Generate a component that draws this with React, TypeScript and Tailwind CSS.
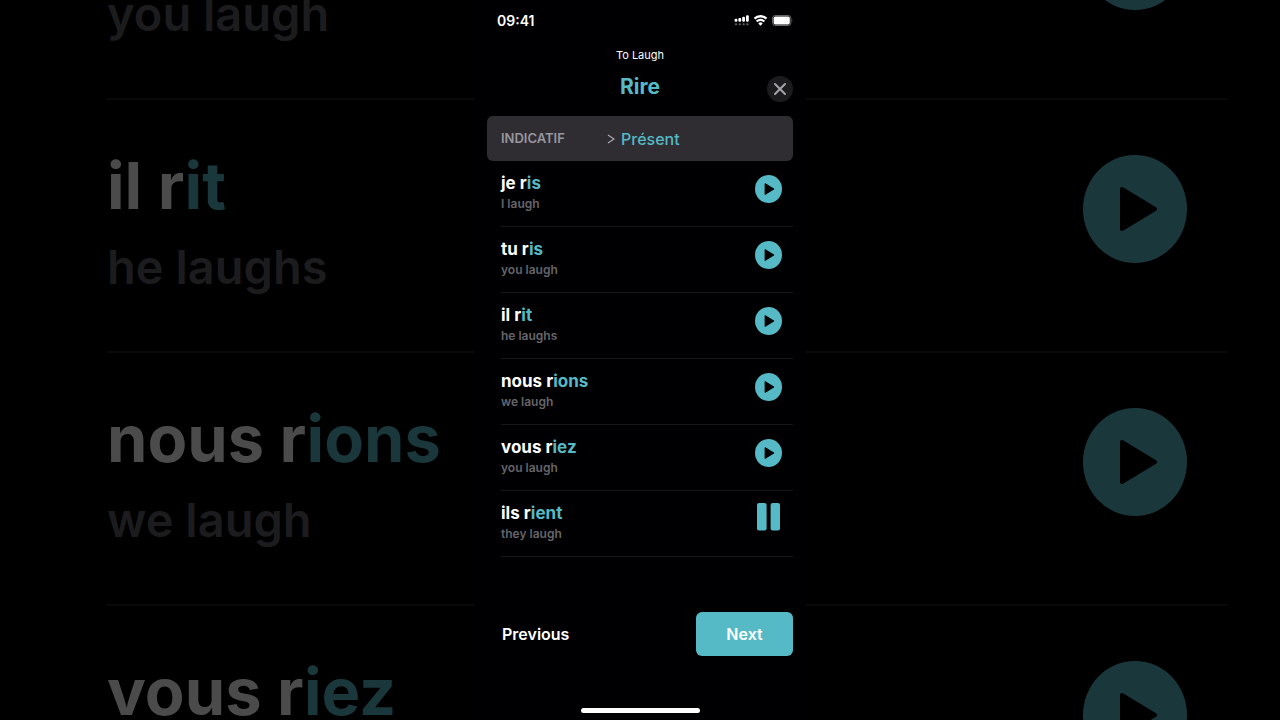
import { X } from 'lucide-react'

const verbs = [
  { pronoun: 'je', stem: 'r', ending: 'is', english: 'I laugh' },
  { pronoun: 'tu', stem: 'r', ending: 'is', english: 'you laugh' },
  { pronoun: 'il', stem: 'r', ending: 'it', english: 'he laughs' },
  { pronoun: 'nous', stem: 'r', ending: 'ions', english: 'we laugh' },
  { pronoun: 'vous', stem: 'r', ending: 'iez', english: 'you laugh' },
  { pronoun: 'ils', stem: 'r', ending: 'ient', english: 'they laugh', playing: true },
]

function PlayIcon({ className }: { className?: string }) {
  return (
    <svg viewBox="0 0 104 108" className={className} aria-hidden="true">
      <ellipse cx="52" cy="54" rx="52" ry="54" fill="currentColor" />
      <path d="M39 34 L72 54 L39 74 Z" fill="#000" stroke="#000" strokeWidth="4" strokeLinejoin="round" />
    </svg>
  )
}

function PauseIcon({ className }: { className?: string }) {
  return (
    <svg viewBox="0 0 27 28" className={className} aria-hidden="true">
      <rect x="2" y="0" width="9.6" height="27.6" rx="2" fill="currentColor" />
      <rect x="15.6" y="0" width="9.4" height="27.6" rx="2" fill="currentColor" />
    </svg>
  )
}

function StatusIcons() {
  return (
    <svg viewBox="0 0 60 14" className="h-[14px] w-[60px]" fill="#fff" aria-hidden="true">
      {/* dual sim signal */}
      <rect x="1.6" y="5.8" width="2.8" height="3" rx="1" />
      <rect x="5.4" y="5" width="2.8" height="3.8" rx="1" />
      <rect x="9.2" y="3.8" width="2.8" height="5" rx="1" />
      <rect x="13" y="2.2" width="2.8" height="6.6" rx="1" />
      <g opacity="0.35">
        <rect x="1.8" y="10.2" width="2.4" height="2" rx="0.8" />
        <rect x="5.6" y="10.2" width="2.4" height="2" rx="0.8" />
        <rect x="9.4" y="10.2" width="2.4" height="2" rx="0.8" />
        <rect x="13.2" y="10.2" width="2.4" height="2" rx="0.8" />
      </g>
      {/* wifi */}
      <g fill="none" stroke="#fff" strokeWidth="2.3">
        <path d="M21.5 5.6 A8.8 8.8 0 0 1 33.5 5.6" />
        <path d="M23.7 8.5 A5.4 5.4 0 0 1 31.3 8.5" />
      </g>
      <path d="M25.3 10.4 A3 3 0 0 1 29.7 10.4 L27.5 12.8 Z" />
      {/* battery */}
      <rect x="39.5" y="2.5" width="18.4" height="10" rx="2.8" fill="none" stroke="#fff" strokeOpacity="0.4" />
      <rect x="40.6" y="3.5" width="16.2" height="8" rx="1.8" />
      <path d="M58.8 6 Q60 7.5 58.8 9 Z" opacity="0.5" />
    </svg>
  )
}

// Oversized, dimmed copy of the list that fills the space around the phone
function Backdrop() {
  return (
    <div
      aria-hidden="true"
      className="pointer-events-none absolute inset-x-0 -top-[153px] bottom-0 overflow-hidden pr-[52px] pl-[107px]"
    >
      {verbs.slice(1, 5).map((verb) => (
        <div key={verb.pronoun} className="flex h-[253px] justify-between border-b-2 border-[#090909] pt-[55px] pr-[41px]">
          <div>
            <p className="text-[65px] leading-[62px] font-bold text-[#4b4b4b]">
              {verb.pronoun} {verb.stem}
              <span className="text-[#1a383b]">{verb.ending}</span>
            </p>
            <p className="mt-[18px] text-[47px] leading-[64px] font-semibold text-[#1c1c1e]">{verb.english}</p>
          </div>
          <PlayIcon className="h-[108px] w-[104px] text-[#1a383b]" />
        </div>
      ))}
    </div>
  )
}

export default function App() {
  return (
    <div className="relative min-h-screen overflow-hidden bg-black font-['Inter',sans-serif]">
      <Backdrop />

      <main className="relative mx-auto flex min-h-screen w-full max-w-[332px] flex-col bg-[#000002] px-[13px] text-white">
        <div className="flex h-10 items-center justify-between pl-[10px]">
          <span className="text-[14px] font-semibold">09:41</span>
          <StatusIcons />
        </div>

        <header className="pt-[5px] pb-[14px] text-center">
          <p className="mb-[7px] text-[11px] leading-5">To Laugh</p>
          <div className="grid h-[30px] grid-cols-[1fr_auto_1fr]">
            <h1 className="col-start-2 text-[21px] leading-[30px] font-bold text-[#55bac6]">Rire</h1>
            <button
              type="button"
              aria-label="Close"
              className="flex size-[26px] items-center justify-center self-end justify-self-end rounded-full bg-[#1c1c1f] text-[#a5a3aa]"
            >
              <X className="size-5" strokeWidth={2.4} />
            </button>
          </div>
        </header>

        <button type="button" className="flex h-[45px] items-center rounded-md bg-[#2f2d32] pl-[14px] text-left">
          <span className="w-[106px] text-[13px] font-semibold text-[#98969e]">INDICATIF</span>
          <svg viewBox="0 0 8 10" className="h-[10px] w-2" aria-hidden="true">
            <path d="M1 1 L7 5 L1 9" fill="none" stroke="#aaa8af" strokeWidth="1.2" />
          </svg>
          <span className="pl-[6px] text-base font-medium text-[#55bac6]">Présent</span>
        </button>

        <ul className="pl-[14px]">
          {verbs.map((verb) => (
            <li key={verb.pronoun} className="flex h-[66px] justify-between border-b border-[#171719] pt-3 pr-[11px]">
              <div className="pt-px">
                <p className="text-[17px] leading-[18px] font-bold">
                  {verb.pronoun} {verb.stem}
                  <span className="text-[#55bac6]">{verb.ending}</span>
                </p>
                <p className="mt-[3px] text-xs leading-[18px] font-semibold text-[#666569]">{verb.english}</p>
              </div>
              <button
                type="button"
                aria-label={verb.playing ? 'Pause' : 'Play'}
                className="flex h-[30px] w-[27px] flex-col justify-between text-[#55bac6]"
              >
                {verb.playing ? <PauseIcon className="h-7 w-[27px]" /> : <PlayIcon className="mt-auto h-7 w-[27px]" />}
              </button>
            </li>
          ))}
        </ul>

        <nav className="mt-auto flex items-center justify-between pb-[52px] pl-[15px]">
          <button type="button" className="text-base font-semibold">
            Previous
          </button>
          <button type="button" className="h-11 w-[97px] rounded-md bg-[#55bac6] text-base font-semibold">
            Next
          </button>
        </nav>
        <div className="mx-auto mb-[7px] h-[5px] w-[119px] rounded-full bg-white" />
      </main>
    </div>
  )
}
